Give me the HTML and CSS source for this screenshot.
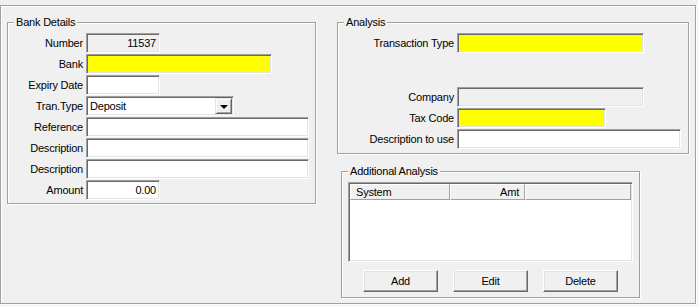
FILE: index.html
```html
<!DOCTYPE html>
<html>
<head>
<meta charset="utf-8">
<link rel="stylesheet" href="styles.css">
</head>
<body>
<div class="frame">
  <div class="group bank">
    <span class="legend">Bank Details</span>
    <div class="row"><span class="lbl">Number</span><div class="field ro num w74">11537</div></div>
    <div class="row"><span class="lbl">Bank</span><div class="field yel w186"></div></div>
    <div class="row"><span class="lbl">Expiry Date</span><div class="field w74"></div></div>
    <div class="row"><span class="lbl">Tran.Type</span><div class="field combo w148"><span class="val">Deposit</span><span class="dd"><span class="tri"></span></span></div></div>
    <div class="row"><span class="lbl">Reference</span><div class="field w223"></div></div>
    <div class="row"><span class="lbl">Description</span><div class="field w223"></div></div>
    <div class="row"><span class="lbl">Description</span><div class="field w223"></div></div>
    <div class="row"><span class="lbl">Amount</span><div class="field num w74">0.00</div></div>
  </div>
  <div class="rightcol">
    <div class="group analysis">
      <span class="legend">Analysis</span>
      <div class="row"><span class="lbl">Transaction Type</span><div class="field yel w187"></div></div>
      <div class="row gapbig"><span class="lbl">Company</span><div class="field ro w187"></div></div>
      <div class="row"><span class="lbl">Tax Code</span><div class="field yel w149"></div></div>
      <div class="row"><span class="lbl">Description to use</span><div class="field w224"></div></div>
    </div>
    <div class="group additional">
      <span class="legend">Additional Analysis</span>
      <div class="list">
        <div class="header">
          <div class="hcell c1">System</div>
          <div class="hcell c2">Amt</div>
          <div class="hcell c3"></div>
        </div>
      </div>
      <div class="buttons">
        <div class="btn">Add</div>
        <div class="btn">Edit</div>
        <div class="btn">Delete</div>
      </div>
    </div>
  </div>
</div>
</body>
</html>
```
FILE: styles.css
```css
html, body {
  margin: 0;
  padding: 0;
}
body {
  width: 698px;
  height: 306px;
  background: #f0f0f0;
  font-family: "Liberation Sans", Arial, sans-serif;
  font-size: 11px;
  letter-spacing: -0.2px;
  color: #000;
  overflow: hidden;
}
.frame {
  margin-top: 5px;
  width: 696px;
  height: 299px;
  box-sizing: border-box;
  border: 1px solid #a0a0a0;
  box-shadow: 1px 1px 0 #fff, inset 1px 1px 0 #fff;
  display: flex;
  align-items: flex-start;
  padding: 16px 0 0 6px;
}
.group {
  position: relative;
  box-sizing: border-box;
  border: 1px solid #a0a0a0;
  box-shadow: 1px 1px 0 #fff, inset 1px 1px 0 #fff;
}
.legend {
  position: absolute;
  top: -7px;
  left: 6px;
  padding: 0 2px;
  background: #f0f0f0;
  line-height: 13px;
}
.bank {
  width: 309px;
  height: 182px;
  padding-top: 10px;
}
.rightcol {
  margin-left: 21px;
  display: flex;
  flex-direction: column;
}
.analysis {
  width: 352px;
  height: 132px;
  padding-top: 10px;
}
.additional {
  width: 299px;
  height: 127px;
  margin-left: 4px;
  margin-top: 17px;
  padding: 10px 0 0 6px;
}
.row {
  display: flex;
  align-items: center;
  height: 20px;
  margin-bottom: 1px;
}
.gapbig {
  margin-top: 34px;
}
.lbl {
  box-sizing: border-box;
  text-align: right;
  padding-right: 3px;
  white-space: nowrap;
}
.bank .lbl { width: 78px; }
.analysis .lbl { width: 119px; }
.field {
  box-sizing: border-box;
  height: 20px;
  background: #fff;
  border: 1px solid;
  border-color: #a0a0a0 #fff #fff #a0a0a0;
  box-shadow: inset 1px 1px 0 #696969, inset -1px -1px 0 #e3e3e3;
  line-height: 18px;
  padding: 0 3px;
  white-space: nowrap;
}
.ro { background: #f0f0f0; }
.yel { background: #ffff00; }
.num { text-align: right; }
.w74 { width: 74px; }
.w148 { width: 148px; }
.w149 { width: 149px; }
.w186 { width: 186px; }
.w187 { width: 187px; }
.w223 { width: 223px; }
.w224 { width: 224px; }
.combo {
  display: flex;
  align-items: center;
  padding: 1px 1px 1px 3px;
}
.combo .val {
  flex: 1;
  line-height: 16px;
}
.dd {
  box-sizing: border-box;
  width: 17px;
  height: 16px;
  background: #f0f0f0;
  border: 1px solid;
  border-color: #e3e3e3 #696969 #696969 #e3e3e3;
  box-shadow: inset 1px 1px 0 #fff, inset -1px -1px 0 #a0a0a0;
  display: flex;
  align-items: center;
  justify-content: center;
}
.tri {
  width: 0;
  height: 0;
  border-left: 4px solid transparent;
  border-right: 4px solid transparent;
  border-top: 4px solid #000;
  margin-top: 1px;
}
.list {
  box-sizing: border-box;
  width: 285px;
  height: 80px;
  background: #fff;
  border: 1px solid;
  border-color: #a0a0a0 #fff #fff #a0a0a0;
  box-shadow: inset 1px 1px 0 #696969, inset -1px -1px 0 #e3e3e3;
  padding: 1px;
}
.header {
  display: flex;
  height: 16px;
}
.hcell {
  box-sizing: border-box;
  height: 16px;
  background: #f0f0f0;
  border: 1px solid;
  border-color: #fff #a0a0a0 #a0a0a0 #fff;
  line-height: 14px;
  white-space: nowrap;
}
.c1 { width: 100px; padding-left: 5px; }
.c2 { width: 75px; text-align: right; padding-right: 5px; }
.c3 { flex: 1; }
.buttons {
  display: flex;
  gap: 15px;
  margin: 8px 0 0 15px;
}
.btn {
  box-sizing: border-box;
  width: 75px;
  height: 22px;
  background: #f0f0f0;
  border: 1px solid;
  border-color: #fff #696969 #696969 #fff;
  box-shadow: inset -1px -1px 0 #a0a0a0, inset 1px 1px 0 #e3e3e3;
  text-align: center;
  line-height: 20px;
}
```
